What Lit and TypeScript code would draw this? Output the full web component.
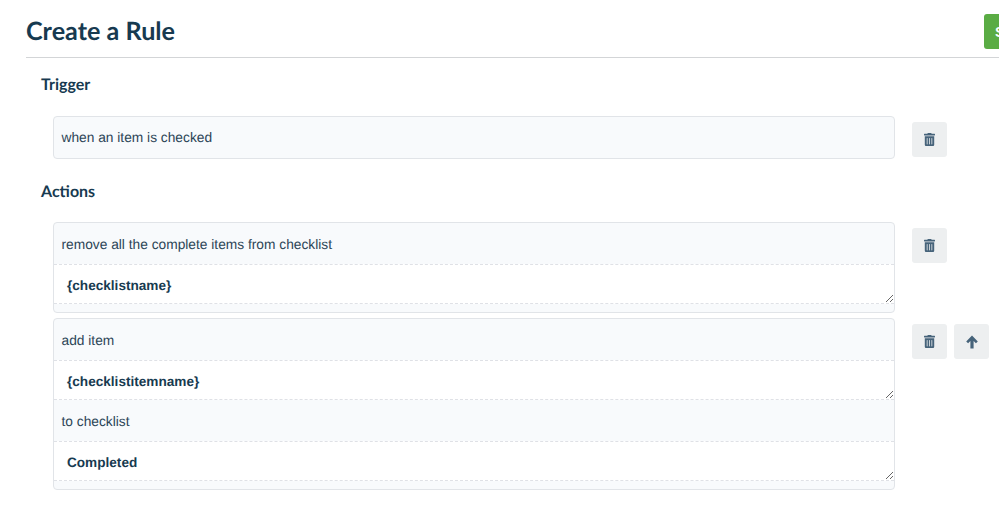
import { LitElement, html, css, svg } from 'lit';
import { customElement } from 'lit/decorators.js';

const trashIcon = svg`<path d="M32 464a48 48 0 0 0 48 48h288a48 48 0 0 0 48-48V128H32zm272-256a16 16 0 0 1 32 0v224a16 16 0 0 1-32 0zm-96 0a16 16 0 0 1 32 0v224a16 16 0 0 1-32 0zm-96 0a16 16 0 0 1 32 0v224a16 16 0 0 1-32 0zM432 32H312l-9.4-18.7A24 24 0 0 0 281.1 0H166.8a23.72 23.72 0 0 0-21.4 13.3L136 32H16A16 16 0 0 0 0 48v32a16 16 0 0 0 16 16h416a16 16 0 0 0 16-16V48a16 16 0 0 0-16-16z"/>`;
const arrowIcon = svg`<path d="M6 .6 11.8 6.4 9.9 8.3 7.6 6V13.6H4.4V6L2.1 8.3.2 6.4Z"/>`;

@customElement('app-root')
export class AppRoot extends LitElement {
  static styles = css`
    :host {
      display: block;
      width: 999px;
      height: 511px;
      overflow: hidden;
      background: #fff;
      font-family: 'Liberation Sans', Arial, sans-serif;
      font-size: 13.75px;
      color: #2c4557;
      text-rendering: geometricPrecision;
    }

    /* Page header with the cut off save button */
    .header {
      display: flex;
      align-items: flex-start;
      justify-content: space-between;
      margin-left: 26px;
      height: 58px;
      padding-top: 14px;
      box-sizing: border-box;
      border-bottom: 1px solid #d3d5d7;
    }
    h1 {
      margin: 0;
      font: 700 25.2px/34px Lato, sans-serif;
      color: #173a50;
    }
    .save {
      flex: none;
      width: 70px;
      height: 35px;
      margin-right: -55px;
      padding: 0 0 0 11px;
      border: 0;
      border-radius: 3px;
      background: #5aac44;
      color: #fff;
      font: 700 14px 'Liberation Sans', Arial, sans-serif;
      text-align: left;
      white-space: nowrap;
    }

    .content {
      padding-left: 41px;
    }
    h2 {
      margin: 0;
      font: 700 16px/20px Lato, sans-serif;
      color: #173a50;
    }
    .trigger-title {
      padding-top: 17px;
      height: 58px;
      box-sizing: border-box;
    }
    .actions-title {
      padding-top: 18px;
      height: 58px;
      box-sizing: border-box;
    }

    .rule {
      display: flex;
      align-items: flex-start;
      margin: 0 0 5px 12px;
    }
    .card {
      flex: none;
      width: 842px;
      box-sizing: border-box;
      border: 1px solid #e1e4e8;
      border-radius: 4px;
      background: #f8fafc;
      padding-bottom: 8px;
    }
    .card.single {
      padding-bottom: 0;
    }
    .label {
      height: 41px;
      box-sizing: border-box;
      padding-left: 7.5px;
      line-height: 43px;
    }
    .single .label {
      line-height: 41px;
    }
    .value {
      height: 40px;
      box-sizing: border-box;
      border-top: 1px dashed #dfe1e6;
      border-bottom: 1px dashed #dfe1e6;
      background: #fff;
      padding: 12px 13px 0;
      font-size: 13.6px;
      line-height: 18px;
      font-weight: 700;
      color: #173a50;
      overflow: auto;
      resize: vertical;
    }
    .buttons {
      display: flex;
      gap: 7px;
      margin-left: 17px;
      margin-top: 6px;
    }
    .icon-btn {
      display: flex;
      align-items: center;
      justify-content: center;
      width: 35px;
      height: 35px;
      padding: 0;
      border: 0;
      border-radius: 3px;
      background: #edeff0;
    }
    .icon-btn svg {
      display: block;
      width: 11px;
      height: 13px;
      margin-right: 1px;
      fill: #46637a;
    }
    .icon-btn svg.arrow {
      width: 12px;
      height: 14px;
      margin-right: 0;
    }
  `;

  private deleteButton() {
    return html`<button class="icon-btn" aria-label="Delete">
      <svg viewBox="0 0 448 512" preserveAspectRatio="none">${trashIcon}</svg>
    </button>`;
  }

  render() {
    return html`
      <div class="header">
        <h1>Create a Rule</h1>
        <button class="save">Save</button>
      </div>
      <div class="content">
        <h2 class="trigger-title">Trigger</h2>
        <div class="rule">
          <div class="card single"><div class="label">when an item is checked</div></div>
          <div class="buttons">${this.deleteButton()}</div>
        </div>
        <h2 class="actions-title">Actions</h2>
        <div class="rule">
          <div class="card">
            <div class="label">remove all the complete items from checklist</div>
            <div class="value">{checklistname}</div>
          </div>
          <div class="buttons">${this.deleteButton()}</div>
        </div>
        <div class="rule">
          <div class="card">
            <div class="label">add item</div>
            <div class="value">{checklistitemname}</div>
            <div class="label">to checklist</div>
            <div class="value">Completed</div>
          </div>
          <div class="buttons">
            ${this.deleteButton()}
            <button class="icon-btn" aria-label="Move up">
              <svg class="arrow" viewBox="0 0 12 14">${arrowIcon}</svg>
            </button>
          </div>
        </div>
      </div>
    `;
  }
}
